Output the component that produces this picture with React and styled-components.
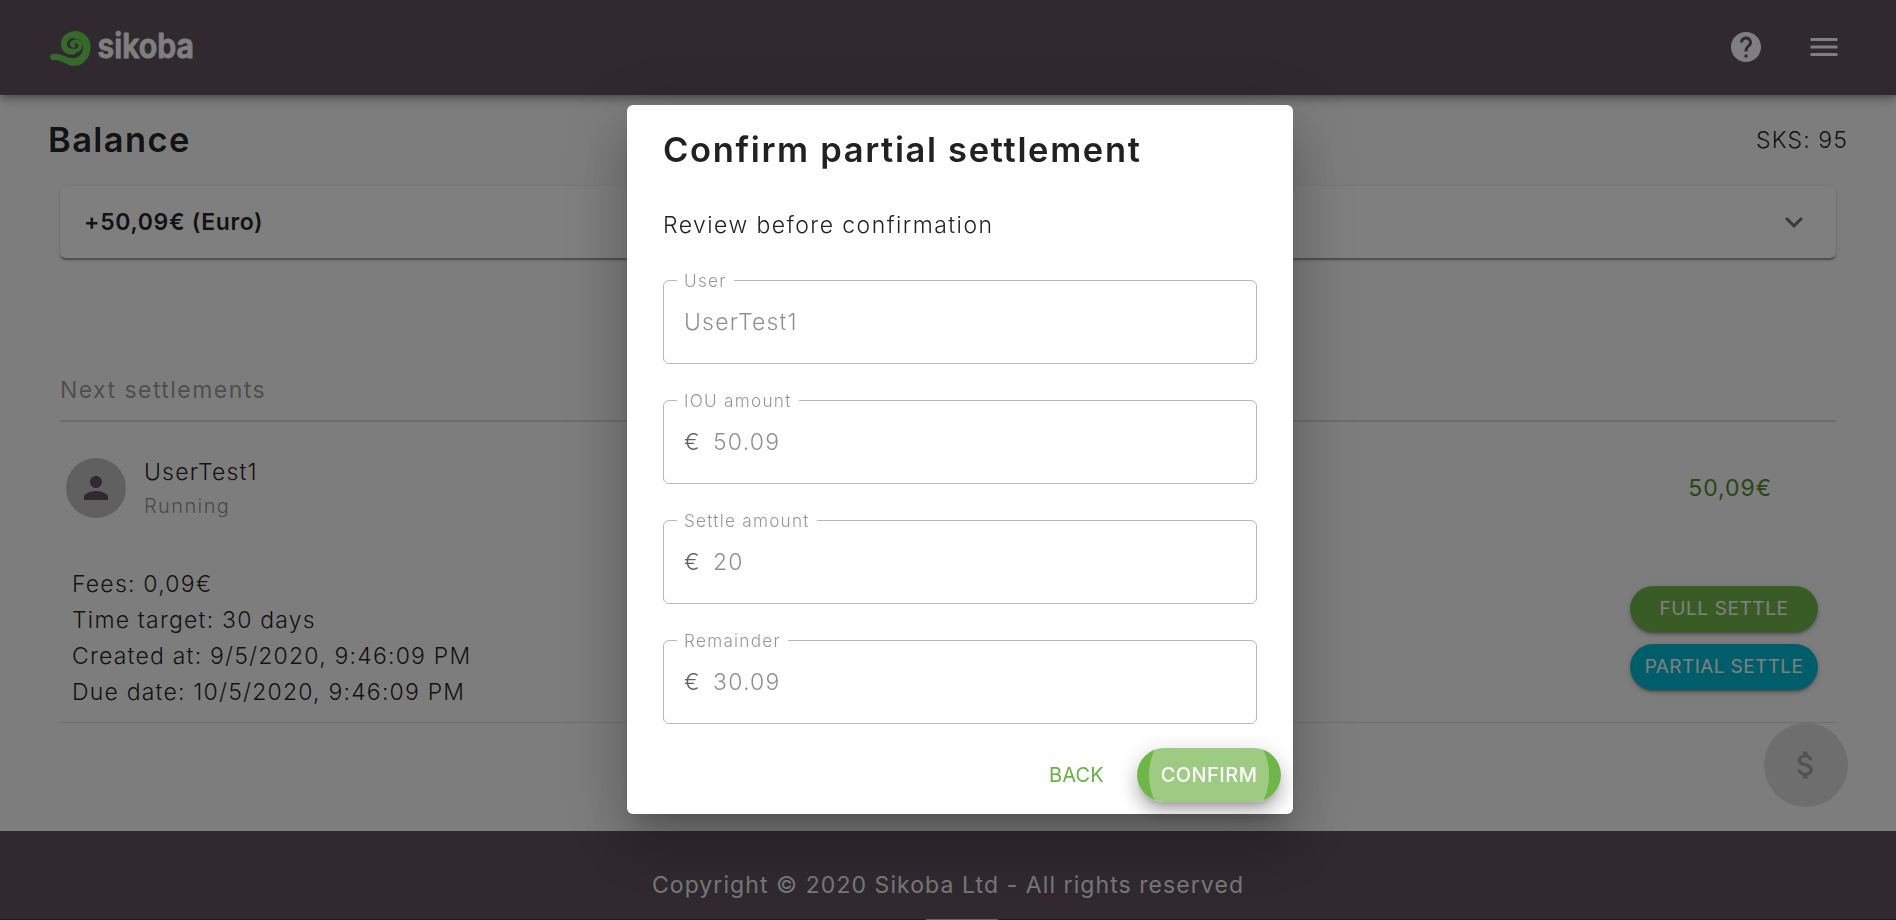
import React from 'react';
import styled, { createGlobalStyle, css } from 'styled-components';

const GlobalStyle = createGlobalStyle`
  *, *::before, *::after { box-sizing: border-box; }
  html, body { margin: 0; height: 100%; overflow: hidden; }
  body {
    background: #fafafa;
    color: rgba(0, 0, 0, 0.87);
    font-family: Inter, "Liberation Sans", sans-serif;
    font-size: 23px;
    font-weight: 300;
    letter-spacing: 1.2px;
  }
`;

const Page = styled.div`
  display: flex;
  flex-direction: column;
  height: 920px;
`;

const TopBar = styled.header`
  flex: none;
  display: flex;
  align-items: center;
  height: 95px;
  padding: 0 48px 1px 49px;
  background: #605460;
  color: #fff;
  z-index: 1;
  box-shadow: 0 3px 6px -1.5px rgba(0, 0, 0, 0.2), 0 6px 7.5px rgba(0, 0, 0, 0.14), 0 1.5px 15px rgba(0, 0, 0, 0.12);
`;

const LogoSvg = styled.svg`
  display: block;
  margin-right: auto;
`;

const BarIcons = styled.nav`
  display: flex;
  gap: 42px;
  padding-right: 6px;
`;

const Icon = styled.svg`
  display: block;
  flex: none;
  width: 36px;
  height: 36px;
  fill: currentColor;
`;

const Main = styled.main`
  flex: none;
  height: 736px;
  padding: 15px 48px 0;
`;

const TitleRow = styled.div`
  display: flex;
  align-items: center;
  justify-content: space-between;
  height: 60px;
`;

const PageTitle = styled.h1`
  margin: 0;
  font-size: 34.5px;
  font-weight: 600;
  line-height: 44px;
  letter-spacing: 1.4px;
`;

const Credits = styled.span`
  letter-spacing: 1.1px;
`;

const Content = styled.div`
  padding: 16px 12px 0;
`;

const BalanceCard = styled.section`
  display: flex;
  align-items: center;
  justify-content: space-between;
  height: 72px;
  padding: 0 24px;
  border-radius: 6px;
  background: #fff;
  font-weight: 600;
  letter-spacing: 0.65px;
  box-shadow: 0 3px 1.5px -1.5px rgba(0, 0, 0, 0.2), 0 1.5px 1.5px rgba(0, 0, 0, 0.14), 0 1.5px 4.5px rgba(0, 0, 0, 0.12);

  svg { color: rgba(0, 0, 0, 0.54); }
`;

const SectionTitle = styled.h2`
  display: flex;
  align-items: center;
  height: 62px;
  margin: 102px 0 0;
  border-bottom: 2px solid #dadada;
  color: rgba(0, 0, 0, 0.4);
  font-size: 23px;
  font-weight: 400;
  letter-spacing: 1.45px;
`;

const Settlement = styled.article`
  border-bottom: 1px solid #dadada;
`;

const SettlementHead = styled.div`
  display: flex;
  align-items: center;
  height: 132px;
  padding: 0 64px 0 6px;
`;

const Avatar = styled.span`
  display: grid;
  place-items: center;
  width: 60px;
  height: 60px;
  margin-right: 18px;
  border-radius: 50%;
  background: #c0c0c0;
  color: #605460;
`;

const Person = styled.div`
  flex: 1;
  padding-top: 2px;
  line-height: 34px;
`;

const Status = styled.div`
  color: rgba(0, 0, 0, 0.45);
  font-size: 20px;
  letter-spacing: 1.4px;
`;

const Amount = styled.span`
  color: #4f8f2e;
  font-weight: 400;
  letter-spacing: 0.95px;
`;

const SettlementBody = styled.div`
  display: flex;
  align-items: center;
  justify-content: space-between;
  padding: 12px 18px 12px 12px;
`;

const Details = styled.ul`
  margin: 0;
  padding: 0;
  list-style: none;
  line-height: 36px;
`;

const SettleActions = styled.div`
  display: flex;
  flex-direction: column;
  gap: 12px;
  width: 188px;
`;

const buttonBase = css`
  display: block;
  margin: 0;
  border: 0;
  font-family: inherit;
  font-weight: 400;
  text-align: center;
  white-space: nowrap;
`;

const SettleButton = styled.button`
  ${buttonBase}
  height: 46px;
  padding: 0 0 2px;
  border-radius: 23px;
  background: ${({ $tone }) => ($tone === 'info' ? '#00bcd4' : '#73b84c')};
  color: #fff;
  font-size: 19px;
  letter-spacing: ${({ $tone }) => ($tone === 'info' ? 0.4 : 0.6)}px;
  box-shadow: 0 4.5px 1.5px -3px rgba(0, 0, 0, 0.2), 0 3px 3px rgba(0, 0, 0, 0.14), 0 1.5px 7.5px rgba(0, 0, 0, 0.12);
`;

const Fab = styled.button`
  position: fixed;
  right: 48px;
  bottom: 113px;
  display: grid;
  place-items: center;
  width: 84px;
  height: 84px;
  padding: 0;
  border: 0;
  border-radius: 50%;
  background: #dcdcdc;
  color: #a3a3a3;
`;

const Footer = styled.footer`
  display: flex;
  flex-direction: column;
  height: 89px;
  background: #605460;
  color: rgba(255, 255, 255, 0.92);
  font-weight: 400;
  letter-spacing: 1.07px;
`;

const Copyright = styled.div`
  flex: 1;
  padding-top: 39px;
  line-height: 30px;
  text-align: center;
`;

const BottomEdge = styled.div`
  height: 1px;
  padding-left: 926px;
  background: #3c343c;

  &::before {
    content: "";
    display: block;
    width: 72px;
    height: 1px;
    background: #c8c8c8;
  }
`;

const Backdrop = styled.div`
  position: fixed;
  inset: 0;
  z-index: 10;
  display: flex;
  align-items: center;
  justify-content: center;
  padding: 0 0 1px 24px;
  background: rgba(0, 0, 0, 0.5);
`;

const Dialog = styled.div`
  width: 666px;
  height: 709px;
  border-radius: 6px;
  background: #fff;
  box-shadow: 0 16.5px 22.5px -10.5px rgba(0, 0, 0, 0.2), 0 36px 57px 4.5px rgba(0, 0, 0, 0.14), 0 13.5px 69px 12px rgba(0, 0, 0, 0.12);
`;

const DialogTitle = styled.h2`
  height: 105px;
  margin: 0;
  padding: 0 36px;
  font-size: 34.5px;
  font-weight: 600;
  line-height: 90px;
  letter-spacing: 1.65px;
  white-space: nowrap;
`;

const DialogContent = styled.div`
  display: flex;
  flex-direction: column;
  gap: 26px;
  padding: 0 36px;
`;

const Hint = styled.p`
  margin: 0 0 4px;
  line-height: 30px;
  letter-spacing: 1.43px;
`;

const Field = styled.fieldset`
  min-width: 0;
  margin: 0;
  padding: 0 0 10px;
  border: 1px solid #b9b9b9;
  border-radius: 6px;
`;

const FieldLabel = styled.legend`
  height: 21px;
  margin-left: 13px;
  padding: 0 7px 0 7px;
  color: rgba(0, 0, 0, 0.42);
  font-size: 17.2px;
  line-height: 22px;
  letter-spacing: 1.25px;
`;

const FieldValue = styled.div`
  display: flex;
  align-items: center;
  height: 62px;
  padding-left: 20px;
  color: rgba(0, 0, 0, 0.44);
`;

const Currency = styled.span`
  width: 29px;
  color: rgba(0, 0, 0, 0.62);
`;

const DialogActions = styled.div`
  display: flex;
  align-items: center;
  justify-content: flex-end;
  gap: 21px;
  padding: 24px 12px 12px;
`;

const TextButton = styled.button`
  ${buttonBase}
  height: 54px;
  padding: 0 12px;
  background: none;
  color: #6bb045;
  font-size: 20px;
  letter-spacing: 0.2px;
`;

const ConfirmButton = styled.button`
  ${buttonBase}
  width: 144px;
  height: 54px;
  padding: 0;
  border-radius: 27px;
  background: radial-gradient(circle at center, #9ccb81 59.5px, #70b549 60.5px);
  color: #fff;
  font-size: 20px;
  font-weight: 500;
  letter-spacing: 0.45px;
  box-shadow: 0 7.5px 7.5px -4.5px rgba(0, 0, 0, 0.2), 0 12px 15px 1.5px rgba(0, 0, 0, 0.14), 0 4.5px 21px 3px rgba(0, 0, 0, 0.12);
`;

const Logo = () => (
  <LogoSvg width="160" height="44" viewBox="49 25 160 44" role="img" aria-label="sikoba">
    <g fill="none" stroke="#6bd456" strokeLinecap="round" strokeLinejoin="round">
      <path strokeWidth="6.2" d="M53.2 57C60 55.5 64 60.5 71 61.8" />
      <path strokeWidth="7.6" d="M70.5 61.6C80 63.8 86.8 56 86.8 47.2C86.8 40 81.5 35 76 35" />
      <path strokeWidth="6" d="M76.2 34.2C69.5 33.8 64 38.5 64 44.2C64 49 68 52 72.6 51.8" />
      <path strokeWidth="4" d="M72.2 50.8C77.5 51.4 80.4 48.6 80.4 45.6C80.4 42 76.5 40.6 73.6 41.8C71.4 42.8 71.4 45.6 73.6 45.8" />
    </g>
    <text
      x="97.5"
      y="58.3"
      textLength="96.5"
      lengthAdjust="spacingAndGlyphs"
      fill="#fff"
      stroke="#fff"
      strokeWidth="1"
      strokeLinejoin="round"
      fontSize="34.5"
      fontWeight="600"
      letterSpacing="0"
    >
      sikoba
    </text>
  </LogoSvg>
);

const paths = {
  help: 'M12 2C6.48 2 2 6.48 2 12s4.48 10 10 10 10-4.48 10-10S17.52 2 12 2zm1 17h-2v-2h2v2zm2.07-7.75l-.9.92C13.45 12.9 13 13.5 13 15h-2v-.5c0-1.1.45-2.1 1.17-2.83l1.24-1.26c.37-.36.59-.86.59-1.41 0-1.1-.9-2-2-2s-2 .9-2 2H8c0-2.21 1.79-4 4-4s4 1.79 4 4c0 .88-.36 1.68-.93 2.25z',
  menu: 'M3 18h18v-2H3v2zm0-5h18v-2H3v2zm0-7v2h18V6H3z',
  expand: 'M16.59 8.59L12 13.17 7.41 8.59 6 10l6 6 6-6z',
  person: 'M12 12c2.21 0 4-1.79 4-4s-1.79-4-4-4-4 1.79-4 4 1.79 4 4 4zm0 2c-2.67 0-8 1.34-8 4v2h16v-2c0-2.66-5.33-4-8-4z',
  money: 'M11.8 10.9c-2.27-.59-3-1.2-3-2.15 0-1.09 1.01-1.85 2.7-1.85 1.78 0 2.44.85 2.5 2.1h2.21c-.07-1.72-1.12-3.3-3.21-3.81V3h-3v2.16c-1.94.42-3.5 1.68-3.5 3.61 0 2.31 1.91 3.46 4.7 4.13 2.5.6 3 1.48 3 2.41 0 .69-.49 1.79-2.7 1.79-2.06 0-2.87-.92-2.98-2.1h-2.2c.12 2.19 1.76 3.42 3.68 3.83V21h3v-2.15c1.95-.37 3.5-1.5 3.5-3.55 0-2.84-2.43-3.81-4.7-4.4z',
};

const Glyph = ({ name }) => (
  <Icon viewBox="0 0 24 24" aria-hidden="true">
    <path d={paths[name]} />
  </Icon>
);

const fields = [
  { label: 'User', value: 'UserTest1' },
  { label: 'IOU amount', value: '50.09', currency: '€' },
  { label: 'Settle amount', value: '20', currency: '€' },
  { label: 'Remainder', value: '30.09', currency: '€' },
];

const details = [
  'Fees: 0,09€',
  'Time target: 30 days',
  'Created at: 9/5/2020, 9:46:09 PM',
  'Due date: 10/5/2020, 9:46:09 PM',
];

export default function App() {
  return (
    <>
      <GlobalStyle />
      <Page>
        <TopBar>
          <Logo />
          <BarIcons>
            <Glyph name="help" />
            <Glyph name="menu" />
          </BarIcons>
        </TopBar>
        <Main>
          <TitleRow>
            <PageTitle>Balance</PageTitle>
            <Credits>SKS: 95</Credits>
          </TitleRow>
          <Content>
            <BalanceCard>
              +50,09€ (Euro)
              <Glyph name="expand" />
            </BalanceCard>
            <SectionTitle>Next settlements</SectionTitle>
            <Settlement>
              <SettlementHead>
                <Avatar>
                  <Glyph name="person" />
                </Avatar>
                <Person>
                  UserTest1
                  <Status>Running</Status>
                </Person>
                <Amount>50,09€</Amount>
              </SettlementHead>
              <SettlementBody>
                <Details>
                  {details.map((line) => (
                    <li key={line}>{line}</li>
                  ))}
                </Details>
                <SettleActions>
                  <SettleButton>FULL SETTLE</SettleButton>
                  <SettleButton $tone="info">PARTIAL SETTLE</SettleButton>
                </SettleActions>
              </SettlementBody>
            </Settlement>
          </Content>
        </Main>
        <Footer>
          <Copyright>Copyright © 2020 Sikoba Ltd - All rights reserved</Copyright>
          <BottomEdge />
        </Footer>
        <Fab aria-label="New payment">
          <Glyph name="money" />
        </Fab>
      </Page>
      <Backdrop>
        <Dialog role="dialog">
          <DialogTitle>Confirm partial settlement</DialogTitle>
          <DialogContent>
            <Hint>Review before confirmation</Hint>
            {fields.map(({ label, value, currency }) => (
              <Field key={label}>
                <FieldLabel>{label}</FieldLabel>
                <FieldValue>
                  {currency && <Currency>{currency}</Currency>}
                  {value}
                </FieldValue>
              </Field>
            ))}
          </DialogContent>
          <DialogActions>
            <TextButton>BACK</TextButton>
            <ConfirmButton>CONFIRM</ConfirmButton>
          </DialogActions>
        </Dialog>
      </Backdrop>
    </>
  );
}
